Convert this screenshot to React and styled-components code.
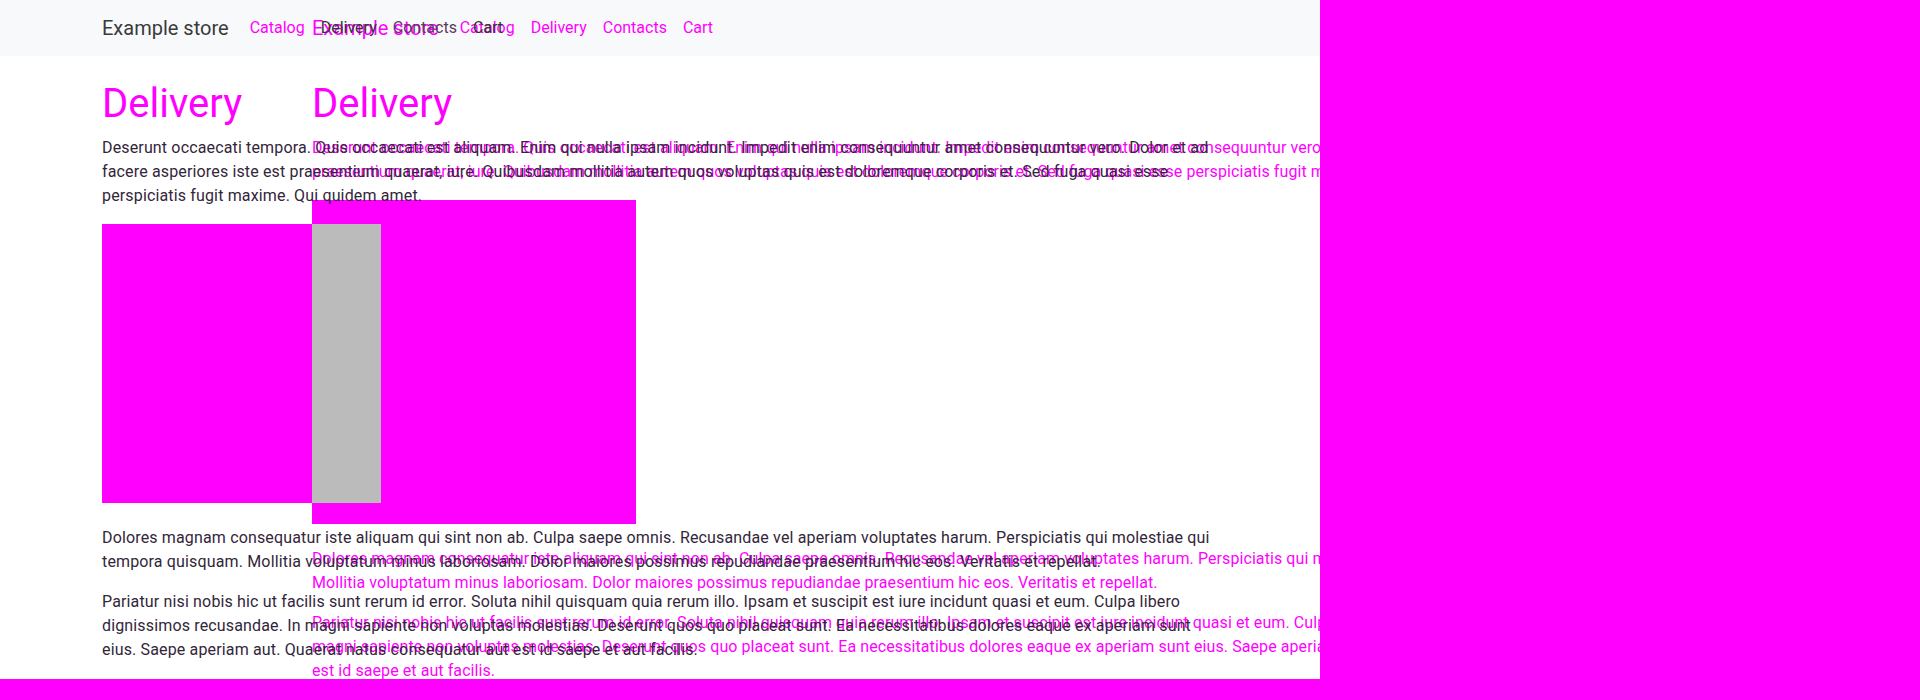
import React from 'react';
import styled, { createGlobalStyle } from 'styled-components';

const MAGENTA = '#ff00ff';

const GlobalStyle = createGlobalStyle`
  html, body {
    margin: 0;
    padding: 0;
    background: #fff;
  }
  * {
    box-sizing: border-box;
  }
`;

// whole shot: the narrow render sits in the top-left cell, the rest is diff colour
const Stage = styled.div`
  position: relative;
  width: 1920px;
  height: 700px;
  display: grid;
  grid-template-columns: 1320px 600px;
  grid-template-rows: 679px 21px;
  background: ${MAGENTA};
  overflow: hidden;
  font-family: Roboto, "Liberation Sans", Arial, sans-serif;
`;

const Cell = styled.div`
  position: relative;
  background: #fff;
  overflow: hidden;
`;

const NavBg = styled.div`
  position: absolute;
  left: 0;
  right: 0;
  top: 0;
  height: 56px;
  background: #f8f9fa;
`;

// one render of the page; the wide one lies under the narrow one
const Layer = styled.div`
  position: absolute;
  top: 0;
  left: 0;
  width: ${(p) => p.$viewport}px;
  z-index: ${(p) => p.$z};
  color: ${(p) => p.$color};
`;

const Navbar = styled.nav`
  padding: 8px 0;
`;

const Container = styled.div`
  max-width: ${(p) => p.$max}px;
  margin: 0 auto;
  padding: 0 12px;
`;

const NavInner = styled(Container)`
  display: flex;
  align-items: center;
`;

const Brand = styled.span`
  font-size: 20px;
  line-height: 30px;
  padding: 5px 0;
  margin-right: 13px;
  color: ${(p) => p.$color};
`;

const NavLinks = styled.ul`
  display: flex;
  list-style: none;
  margin: 0;
  padding: 0;
`;

const NavLink = styled.li`
  padding: 8px;
  font-size: 16px;
  line-height: 24px;
  color: ${(p) => p.$color};
`;

const Main = styled(Container)`
  margin-top: 24px;
`;

const Title = styled.h1`
  margin: 0 0 8px;
  font-size: 40px;
  font-weight: 400;
  line-height: 48px;
  color: ${(p) => p.$color};
`;

const Text = styled.p`
  margin: 0 0 16px;
  font-size: 16px;
  line-height: 24px;
  letter-spacing: ${(p) => p.$spacing}px;
`;

const Picture = styled.div`
  width: 25%;
  aspect-ratio: 1;
  margin-bottom: 23px;
  background: ${(p) => p.$bg};
`;

const paragraphs = [
  'Deserunt occaecati tempora. Quis occaecati est aliquam. Enim qui nulla ipsam incidunt. Impedit enim consequuntur amet consequuntur vero. Dolor et ad facere asperiores iste est praesentium quaerat, iure. Quibusdam mollitia autem quos voluptas quis est doloremque corporis et. Sed fuga quasi esse perspiciatis fugit maxime. Qui quidem amet.',
  'Dolores magnam consequatur iste aliquam qui sint non ab. Culpa saepe omnis. Recusandae vel aperiam voluptates harum. Perspiciatis qui molestiae qui tempora quisquam. Mollitia voluptatum minus laboriosam. Dolor maiores possimus repudiandae praesentium hic eos. Veritatis et repellat.',
  'Pariatur nisi nobis hic ut facilis sunt rerum id error. Soluta nihil quisquam quia rerum illo. Ipsam et suscipit est iure incidunt quasi et eum. Culpa libero dignissimos recusandae. In magni sapiente non voluptas molestias. Deserunt quos quo placeat sunt. Ea necessitatibus dolores eaque ex aperiam sunt eius. Saepe aperiam aut. Quaerat natus consequatur aut est id saepe et aut facilis.',
];

const links = ['Catalog', 'Delivery', 'Contacts', 'Cart'];

const Page = ({ viewport, max, z, text, spacing, brand, linkColors, title, picture }) => (
  <Layer $viewport={viewport} $z={z} $color={text}>
    <Navbar>
      <NavInner $max={max}>
        <Brand $color={brand}>Example store</Brand>
        <NavLinks>
          {links.map((l, i) => (
            <NavLink key={l} $color={linkColors[i]}>{l}</NavLink>
          ))}
        </NavLinks>
      </NavInner>
    </Navbar>
    <Main $max={max}>
      <Title $color={title}>Delivery</Title>
      <Text $spacing={spacing}>{paragraphs[0]}</Text>
      <Picture $bg={picture} />
      <Text $spacing={spacing}>{paragraphs[1]}</Text>
      <Text $spacing={spacing}>{paragraphs[2]}</Text>
    </Main>
  </Layer>
);

const App = () => (
  <>
    <GlobalStyle />
    <Stage>
      <Cell>
        <NavBg />
        <Page
          viewport={1920}
          max={1320}
          z={1}
          text={MAGENTA}
          spacing={0.08}
          brand={MAGENTA}
          linkColors={[MAGENTA, MAGENTA, MAGENTA, MAGENTA]}
          title={MAGENTA}
          picture={MAGENTA}
        />
        <Page
          viewport={1320}
          max={1140}
          z={2}
          text="#33263a"
          spacing={0.15}
          brand="#3a3a3a"
          linkColors={[MAGENTA, '#333', '#5a3a5e', '#333']}
          title={MAGENTA}
          picture={`linear-gradient(to right, ${MAGENTA} 210px, #bbbbbb 210px)`}
        />
      </Cell>
    </Stage>
  </>
);

export default App;
